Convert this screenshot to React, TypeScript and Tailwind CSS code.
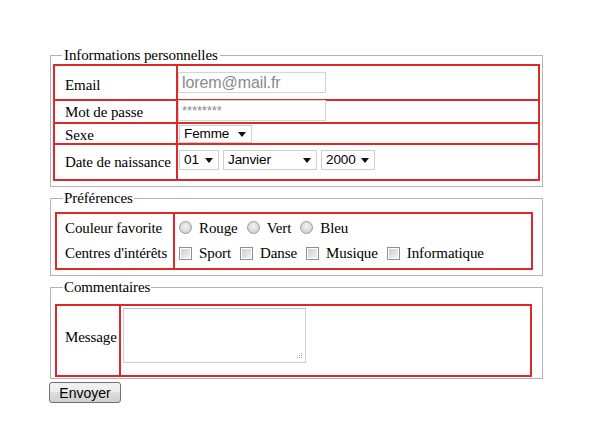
const red = "border-[#dc2a2a]";

function Radio() {
  return (
    <span className="inline-block h-[13px] w-[13px] shrink-0 rounded-full border border-[#9a9a9a] bg-[radial-gradient(circle_at_50%_40%,#f4f4f4_0%,#d8d8d8_60%,#c4c4c4_100%)]" />
  );
}

function Check() {
  return (
    <span className="inline-block h-[13px] w-[13px] shrink-0 border border-[#8f8f8f] bg-white p-[1px]">
      <span className="block h-full w-full bg-[linear-gradient(135deg,#cfcfcf,#f2f2f2)]" />
    </span>
  );
}

function Select({ value, w, h }: { value: string; w: string; h: string }) {
  return (
    <div
      className={`flex items-center justify-between border border-[#cfcfcf] bg-white pl-[4px] pr-[5px] font-['Liberation_Sans',Arial,sans-serif] text-[13.5px] leading-none text-black ${w} ${h}`}
    >
      <span>{value}</span>
      <svg width="8" height="5" viewBox="0 0 8 5">
        <path d="M0 0h8L4 5z" fill="#111" />
      </svg>
    </div>
  );
}

function TextInput({ placeholder, small }: { placeholder: string; small?: boolean }) {
  return (
    <div
      className={`flex h-[21px] w-[148px] border border-[#d4d4d4] bg-white pl-[3px] font-['Liberation_Sans',Arial,sans-serif] text-[#8a8a8a] ${
        small ? "items-start pt-[3px] text-[13px] leading-[13px]" : "items-center text-[16px]"
      }`}
    >
      {placeholder}
    </div>
  );
}

export default function App() {
  return (
    <div className="min-h-[437px] w-[601px] bg-white pl-[50px] pt-[46px] font-['Liberation_Serif','Times_New_Roman',serif] text-[15px] leading-[18px] tracking-[-0.1px] whitespace-nowrap text-black">
      {/* Informations personnelles */}
      <fieldset className="w-[493px] border border-[#b4b4b4] px-[2px] pb-[5px]">
        <legend className="ml-[9px] px-[2px] leading-[18px]">Informations personnelles</legend>
        <div className={`border-2 ${red}`}>
          <div className="flex h-[33px]">
            <div className={`flex w-[123px] items-center border-r-2 ${red} pl-[10px] pt-[4px]`}>Email</div>
            <div className="pt-[6px]">
              <TextInput placeholder="lorem@mail.fr" />
            </div>
          </div>
          <div className={`flex h-[23px] border-t-2 ${red}`}>
            <div className={`flex w-[123px] items-center border-r-2 ${red} pl-[10px]`}>Mot de passe</div>
            <div className="-mt-[1px]">
              <TextInput placeholder="********" small />
            </div>
          </div>
          <div className={`flex h-[21px] border-t-2 ${red}`}>
            <div className={`flex w-[123px] items-center border-r-2 ${red} pl-[10px] pt-[3px]`}>Sexe</div>
            <div className="pl-[1px] pt-[1px]">
              <Select value="Femme" w="w-[73px]" h="h-[18px]" />
            </div>
          </div>
          <div className={`flex h-[36px] border-t-2 ${red}`}>
            <div className={`flex w-[123px] items-center border-r-2 ${red} pl-[10px]`}>Date de naissance</div>
            <div className="flex gap-[4px] pl-[1px] pt-[5px]">
              <Select value="01" w="w-[40px]" h="h-[20px]" />
              <Select value="Janvier" w="w-[94px]" h="h-[20px]" />
              <Select value="2000" w="w-[54px]" h="h-[20px]" />
            </div>
          </div>
        </div>
      </fieldset>

      {/* Préférences */}
      <fieldset className="mt-[2px] w-[493px] border border-[#b4b4b4] pb-[5px] pl-[4px] pt-[5px]">
        <legend className="ml-[8px] px-[1px] leading-[18px]">Préférences</legend>
        <div className={`flex w-[478px] border-2 ${red}`}>
          <div className={`flex w-[118px] flex-col border-r-2 ${red} pl-[8px]`}>
            <div className="flex h-[27px] items-center">Couleur favorite</div>
            <div className="flex h-[27px] items-center pb-[3px]">Centres d'intérêts</div>
          </div>
          <div className="flex flex-col pl-[4px]">
            <div className="flex h-[27px] items-center">
              <Radio />
              <span className="ml-[7px] mr-[9px]">Rouge</span>
              <Radio />
              <span className="ml-[7px] mr-[9px]">Vert</span>
              <Radio />
              <span className="ml-[7px]">Bleu</span>
            </div>
            <div className="flex h-[27px] items-center pb-[3px]">
              <Check />
              <span className="ml-[7px] mr-[9px]">Sport</span>
              <Check />
              <span className="ml-[7px] mr-[9px]">Danse</span>
              <Check />
              <span className="ml-[7px] mr-[9px]">Musique</span>
              <Check />
              <span className="ml-[7px]">Informatique</span>
            </div>
          </div>
        </div>
      </fieldset>

      {/* Commentaires */}
      <fieldset className="mt-[2px] w-[493px] border border-[#b4b4b4] pb-[1px] pl-[4px] pt-[8px]">
        <legend className="ml-[8px] px-[1px] leading-[18px]">Commentaires</legend>
        <div className={`flex h-[73px] w-[477px] border-2 ${red}`}>
          <div className={`flex w-[64px] items-center border-r-2 ${red} pb-[7px] pl-[8px]`}>Message</div>
          <div className="pl-[2px] pt-[2px]">
            <div className="relative h-[55px] w-[183px] border border-[#cfcfcf] border-t-[#bdbdbd] bg-white">
              <svg className="absolute bottom-[2px] right-[2px]" width="7" height="7" viewBox="0 0 7 7">
                <g fill="#a0a0a0">
                  <rect x="5" y="0" width="1" height="1" />
                  <rect x="3" y="2" width="1" height="1" />
                  <rect x="5" y="2" width="1" height="1" />
                  <rect x="1" y="4" width="1" height="1" />
                  <rect x="3" y="4" width="1" height="1" />
                  <rect x="5" y="4" width="1" height="1" />
                </g>
              </svg>
            </div>
          </div>
        </div>
      </fieldset>

      <button className="ml-[-1px] mt-[3px] h-[21px] w-[72px] rounded-[3px] border border-[#707070] bg-[linear-gradient(#f2f2f2,#ebebeb_50%,#dddddd_50%,#cfcfcf)] font-['Liberation_Sans',Arial,sans-serif] text-[14px] leading-none tracking-normal text-black">
        Envoyer
      </button>
    </div>
  );
}
